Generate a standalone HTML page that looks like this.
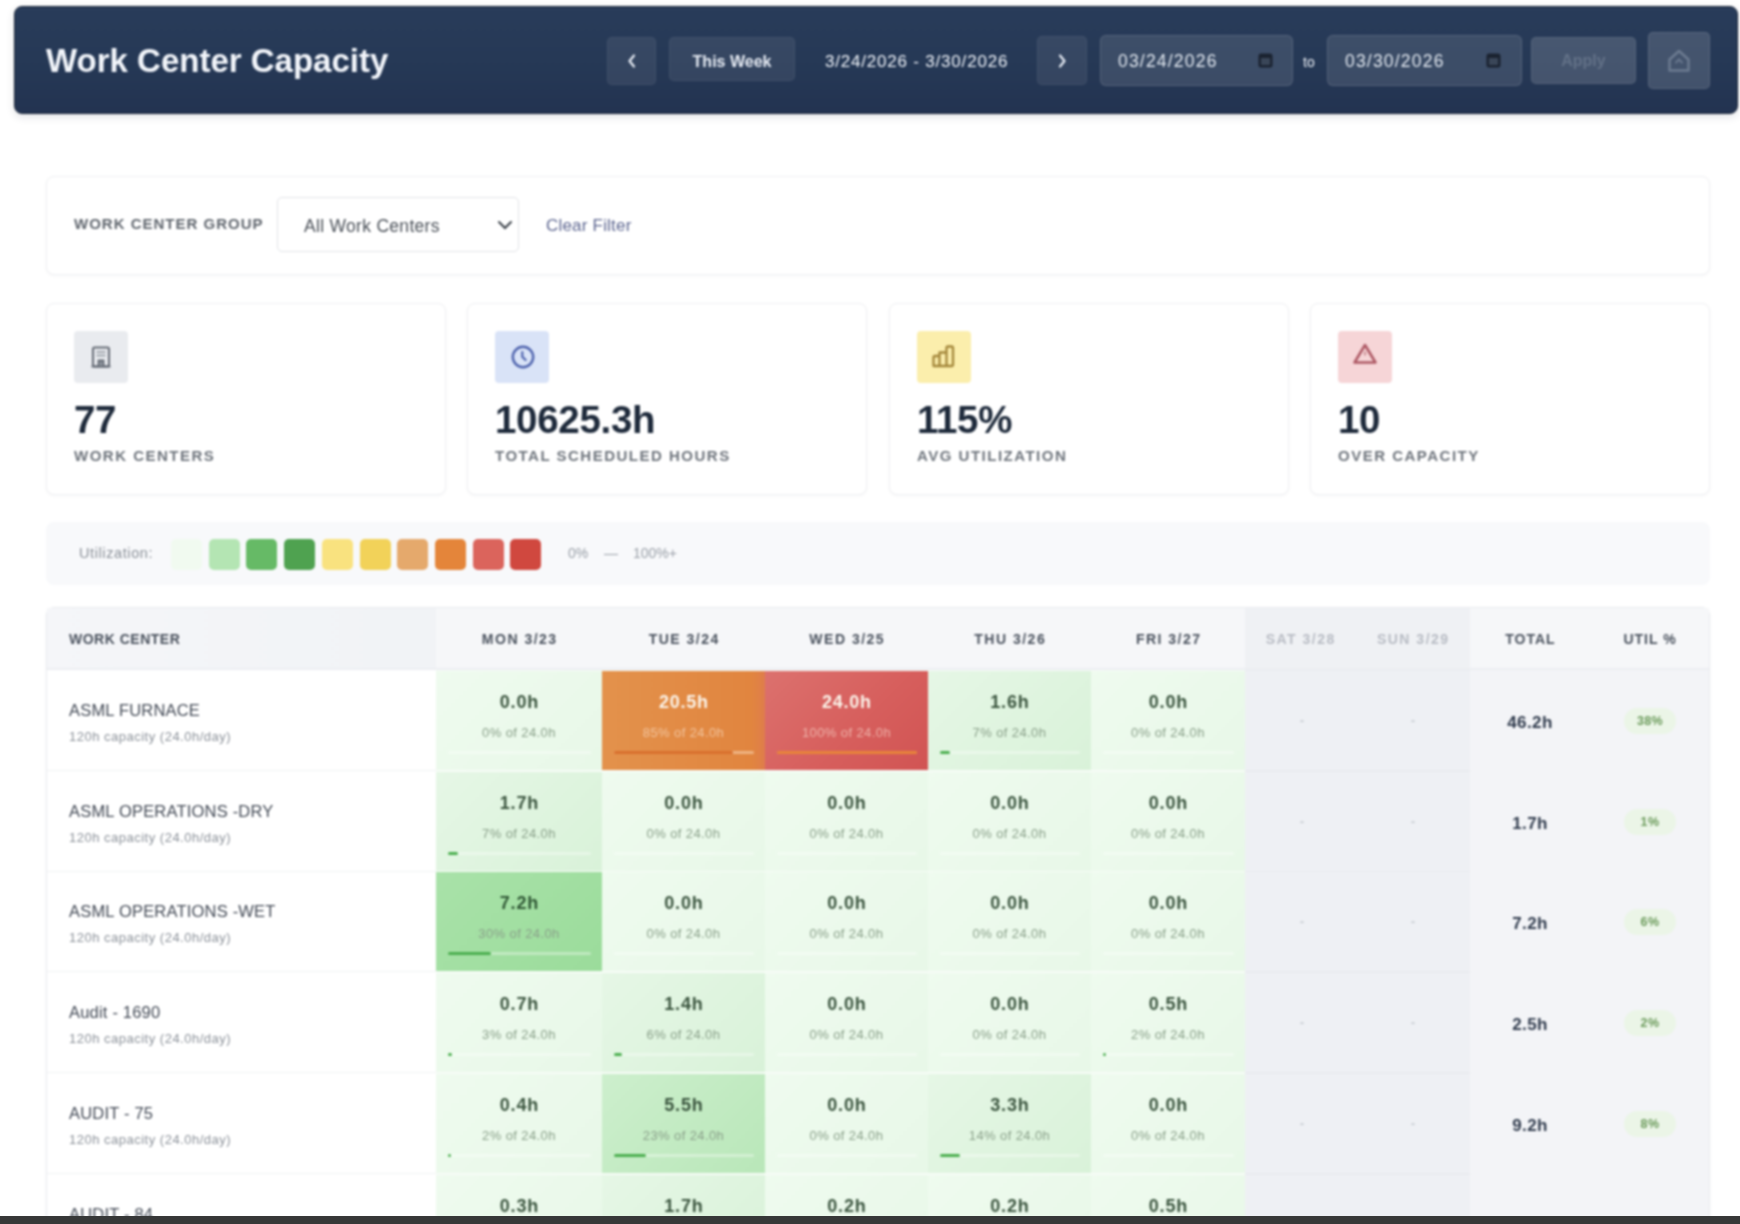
<!DOCTYPE html><html><head><meta charset="utf-8"><style>
*{box-sizing:border-box;margin:0;padding:0}
html,body{width:1740px;height:1224px;overflow:hidden;background:#fff;font-family:"Liberation Sans",sans-serif;position:relative}
#root{position:absolute;left:0;top:0;width:1740px;height:1224px;overflow:hidden;background:#fff;filter:blur(0.8px)}
.abs{position:absolute}
#hdr{left:14px;top:6px;width:1724px;height:108px;border-radius:8px;border:1px solid #1c2739;background:linear-gradient(180deg,#293c5a 0%,#263956 50%,#233351 100%);box-shadow:0 3px 8px rgba(30,40,60,.13)}
#title{left:46px;top:42px;color:#f2f5fa;font-size:33px;font-weight:bold;white-space:nowrap}
.hbtn{position:absolute;border-radius:5px;background:rgba(255,255,255,.075);border:1px solid rgba(255,255,255,.05);color:#e8edf5;font-size:16px;display:flex;align-items:center;justify-content:center}
.htxt{position:absolute;color:#eef2f8;font-size:17px;white-space:nowrap;line-height:20px}
.din{position:absolute;border-radius:6px;background:rgba(255,255,255,.105);border:1px solid rgba(255,255,255,.12);color:#e2e8f0;font-size:17.5px}
.card{position:absolute;background:#fff;border:1px solid #f0f1f4;border-radius:8px;box-shadow:0 1px 3px rgba(20,30,50,.04)}
.t{position:absolute;white-space:nowrap;line-height:1}
.lbl{font-size:15px;letter-spacing:1.5px;color:#6e747c;font-weight:bold}
.ib{position:absolute;width:54px;height:52px;border-radius:4px;display:flex;align-items:center;justify-content:center}
.sw{position:absolute;top:539px;width:31px;height:31px;border-radius:5px}
.cell{position:absolute;overflow:hidden}
.v{position:absolute;left:0;right:0;text-align:center;font-weight:bold;font-size:18px;line-height:1;top:22px;color:#3a543e;letter-spacing:.8px;text-indent:.8px}
.s{position:absolute;left:0;right:0;text-align:center;font-size:13px;line-height:1;top:55px;color:#8aa08a;letter-spacing:.4px}
.tr{position:absolute;left:12px;right:11px;top:80px;height:3px;border-radius:2px;background:rgba(255,255,255,.55)}
.fl{position:absolute;left:0;top:0;bottom:0;border-radius:2px;background:#4caf50}
.hd{position:absolute;top:632px;font-size:14px;font-weight:bold;letter-spacing:1.5px;color:#4a525e;text-align:center;line-height:1}
.nm{position:absolute;left:69px;font-size:16.5px;color:#424955;white-space:nowrap;line-height:1;letter-spacing:.2px}
.sb{position:absolute;left:69px;font-size:13px;color:#8b9199;white-space:nowrap;line-height:1;letter-spacing:.5px}
.tot{position:absolute;left:1470px;width:120px;text-align:center;font-size:17px;font-weight:bold;color:#2f3a4c;line-height:1;letter-spacing:.4px}
.ut{position:absolute;left:1624px;width:52px;height:26px;border-radius:13px;background:#ebf5e7;color:#6c9b5c;font-size:12.5px;letter-spacing:.4px;font-weight:bold;display:flex;align-items:center;justify-content:center}
</style></head><body><div id="root">
<div id="hdr" class="abs"></div>
<div id="title" class="abs">Work Center Capacity</div>
<div class="hbtn" style="left:607px;top:37px;width:49px;height:48px"><svg width="14" height="18" viewBox="0 0 14 18"><path d="M9 3.5 L4.5 9 L9 14.5" stroke="#e8edf5" stroke-width="2.2" fill="none" stroke-linecap="round" stroke-linejoin="round"/></svg></div>
<div class="hbtn" style="left:669px;top:37px;width:126px;height:44px;font-weight:bold;padding-top:5px">This Week</div>
<div class="htxt" style="left:825px;top:52px;letter-spacing:.8px">3/24/2026 - 3/30/2026</div>
<div class="hbtn" style="left:1037px;top:36px;width:50px;height:49px"><svg width="14" height="18" viewBox="0 0 14 18"><path d="M5 3.5 L9.5 9 L5 14.5" stroke="#e8edf5" stroke-width="2.2" fill="none" stroke-linecap="round" stroke-linejoin="round"/></svg></div>
<div class="din" style="left:1100px;top:35px;width:193px;height:51px"><span class="t" style="left:17px;top:17px;letter-spacing:1.2px">03/24/2026</span><svg width="15" height="15" viewBox="0 0 15 15" style="position:absolute;left:157px;top:17px"><rect x="0.5" y="0.5" width="14" height="14" rx="2.5" fill="#1a2230"/><rect x="3" y="5" width="9" height="7" fill="#3a4658"/></svg></div>
<div class="htxt" style="left:1303px;top:52px;font-size:14px">to</div>
<div class="din" style="left:1327px;top:35px;width:195px;height:51px"><span class="t" style="left:17px;top:17px;letter-spacing:1.2px">03/30/2026</span><svg width="15" height="15" viewBox="0 0 15 15" style="position:absolute;left:158px;top:17px"><rect x="0.5" y="0.5" width="14" height="14" rx="2.5" fill="#1a2230"/><rect x="3" y="5" width="9" height="7" fill="#3a4658"/></svg></div>
<div class="hbtn" style="left:1531px;top:37px;width:105px;height:47px;background:rgba(255,255,255,.15);border-color:rgba(255,255,255,.08);color:rgba(200,210,225,.22);font-weight:bold">Apply</div>
<div class="hbtn" style="left:1648px;top:32px;width:62px;height:57px;background:rgba(255,255,255,.14);border-color:rgba(255,255,255,.1)"><svg width="26" height="28" viewBox="0 0 26 28"><path d="M3.5 12.5 L13 4 L22.5 12.5 V23.5 H3.5 Z" stroke="rgba(190,202,220,.33)" stroke-width="2.4" fill="none" stroke-linejoin="round"/><path d="M9.5 16 L13 12.5 L16.5 16" stroke="rgba(190,202,220,.3)" stroke-width="2" fill="none"/></svg></div>
<div class="card" style="left:46px;top:176px;width:1664px;height:99px"></div>
<div class="t lbl" style="left:74px;top:216px;letter-spacing:1.0px;color:#60666e">WORK CENTER GROUP</div>
<div class="abs" style="left:277px;top:197px;width:242px;height:55px;border:1px solid #e2e4e8;border-radius:5px;background:#fff"></div>
<div class="t" style="left:304px;top:218px;font-size:17.5px;color:#4a5058;letter-spacing:.3px">All Work Centers</div>
<svg class="abs" style="left:496px;top:218px" width="18" height="14" viewBox="0 0 18 14"><path d="M3 4 L9 10 L15 4" stroke="#3a4048" stroke-width="2" fill="none" stroke-linecap="round"/></svg>
<div class="t" style="left:546px;top:217px;font-size:17px;color:#5d6690;letter-spacing:.2px">Clear Filter</div>
<div class="card" style="left:46px;top:303px;width:400px;height:192px"></div>
<div class="ib" style="left:74px;top:331px;background:#e9ebef"><svg width="24" height="24" viewBox="0 0 24 24"><rect x="4" y="2.5" width="16" height="19" rx="1.5" stroke="#656b75" stroke-width="2" fill="none"/><path d="M2.5 21.5 H21.5" stroke="#656b75" stroke-width="2"/><path d="M7.5 7 H16.5 M7.5 10.5 H16.5" stroke="#8d939c" stroke-width="1.3"/><path d="M9.5 21 V15.5 H14.5 V21" stroke="#656b75" stroke-width="1.8" fill="#8d939c"/></svg></div>
<div class="t" style="left:74px;top:401px;font-size:38.5px;font-weight:bold;color:#1e2a3b;letter-spacing:-.3px">77</div>
<div class="t lbl" style="left:74px;top:448px">WORK CENTERS</div>
<div class="card" style="left:467px;top:303px;width:400px;height:192px"></div>
<div class="ib" style="left:495px;top:331px;background:#d9e3f7"><svg width="26" height="26" viewBox="0 0 26 26" style="margin-left:2px;margin-top:-1px"><circle cx="13" cy="13" r="10.2" stroke="#4f64ae" stroke-width="2.4" fill="none"/><path d="M12.3 8.2 V12.8 L15.6 16" stroke="#4f64ae" stroke-width="2.2" fill="none" stroke-linecap="round"/></svg></div>
<div class="t" style="left:495px;top:401px;font-size:38.5px;font-weight:bold;color:#1e2a3b;letter-spacing:-.3px">10625.3h</div>
<div class="t lbl" style="left:495px;top:448px">TOTAL SCHEDULED HOURS</div>
<div class="card" style="left:889px;top:303px;width:400px;height:192px"></div>
<div class="ib" style="left:917px;top:331px;background:#fbeeac"><svg width="28" height="28" viewBox="0 0 28 28" style="margin-left:-1px;margin-top:-2px"><path d="M3.5 24 V15.5 Q3.5 14 5 14 H9.5 V24 Z M9.5 24 V10.5 H16.5 V24 M16.5 24 V6 Q16.5 4.5 18 4.5 H21.5 Q23 4.5 23 6 V22.5 Q23 24 21.5 24 H3.5" stroke="#a3863a" stroke-width="2.3" fill="none" stroke-linejoin="round"/></svg></div>
<div class="t" style="left:917px;top:401px;font-size:38.5px;font-weight:bold;color:#1e2a3b;letter-spacing:-.3px">115%</div>
<div class="t lbl" style="left:917px;top:448px">AVG UTILIZATION</div>
<div class="card" style="left:1310px;top:303px;width:400px;height:192px"></div>
<div class="ib" style="left:1338px;top:331px;background:#f6d5d7"><svg width="28" height="26" viewBox="0 0 28 26" style="margin-top:-4px"><path d="M14 3 L24.5 20.5 H3.5 Z" stroke="#ad5864" stroke-width="2.5" fill="none" stroke-linejoin="round"/><path d="M14 9.5 V13.5" stroke="#c07a84" stroke-width="1.6"/></svg></div>
<div class="t" style="left:1338px;top:401px;font-size:38.5px;font-weight:bold;color:#1e2a3b;letter-spacing:-.3px">10</div>
<div class="t lbl" style="left:1338px;top:448px">OVER CAPACITY</div>
<div class="abs" style="left:46px;top:522px;width:1664px;height:63px;background:#f8f9fb;border-radius:8px"></div>
<div class="t" style="left:79px;top:546px;font-size:14.5px;color:#8a9098;letter-spacing:.6px">Utilization:</div>
<div class="sw" style="left:171px;background:#f1faf0"></div>
<div class="sw" style="left:209px;background:#b4e5b3"></div>
<div class="sw" style="left:246px;background:#66ba66"></div>
<div class="sw" style="left:284px;background:#4fa250"></div>
<div class="sw" style="left:322px;background:#f9e27f"></div>
<div class="sw" style="left:360px;background:#f2d259"></div>
<div class="sw" style="left:397px;background:#e5a96c"></div>
<div class="sw" style="left:435px;background:#e4853a"></div>
<div class="sw" style="left:473px;background:#db645c"></div>
<div class="sw" style="left:510px;background:#d0483f"></div>
<div class="t" style="left:568px;top:546px;font-size:14px;color:#9aa0a8">0%</div>
<div class="t" style="left:604px;top:546px;font-size:14px;color:#9aa0a8">—</div>
<div class="t" style="left:633px;top:546px;font-size:14px;color:#9aa0a8">100%+</div>
<div class="card" style="left:46px;top:607px;width:1664px;height:640px;border-color:#e9ebef;border-radius:8px 8px 0 0;overflow:hidden"></div>
<div class="abs" style="left:47px;top:608px;width:1662px;height:62px;background:#f6f7f9;border-bottom:2px solid #eceef2"></div>
<div class="abs" style="left:47px;top:608px;width:389px;height:62px;background:linear-gradient(90deg,#f5f6f9,#f1f3f6);border-bottom:2px solid #eceef2"></div>
<div class="abs" style="left:1245px;top:608px;width:225px;height:62px;background:#eff1f4;border-bottom:2px solid #eceef2"></div>
<div class="hd" style="left:69px;letter-spacing:.5px">WORK CENTER</div>
<div class="hd" style="left:436px;width:166px;color:#4a525e;letter-spacing:1.5px;text-indent:1.5px">MON 3/23</div>
<div class="hd" style="left:602px;width:163px;color:#4a525e;letter-spacing:1.5px;text-indent:1.5px">TUE 3/24</div>
<div class="hd" style="left:765px;width:163px;color:#4a525e;letter-spacing:1.5px;text-indent:1.5px">WED 3/25</div>
<div class="hd" style="left:928px;width:163px;color:#4a525e;letter-spacing:1.5px;text-indent:1.5px">THU 3/26</div>
<div class="hd" style="left:1091px;width:154px;color:#4a525e;letter-spacing:1.5px;text-indent:1.5px">FRI 3/27</div>
<div class="hd" style="left:1245px;width:110px;color:#b8bcc4;letter-spacing:1.5px;text-indent:1.5px">SAT 3/28</div>
<div class="hd" style="left:1355px;width:115px;color:#b8bcc4;letter-spacing:1.5px;text-indent:1.5px">SUN 3/29</div>
<div class="hd" style="left:1470px;width:120px;color:#4a525e;letter-spacing:1.0px;text-indent:1.0px">TOTAL</div>
<div class="hd" style="left:1590px;width:119px;color:#4a525e;letter-spacing:1.0px;text-indent:1.0px">UTIL %</div>
<div class="abs" style="left:47px;top:670px;width:389px;height:560px;background:#fff"></div>
<div class="abs" style="left:436px;top:670px;width:809px;height:560px;background:#f7fcf7"></div>
<div class="abs" style="left:1245px;top:670px;width:225px;height:560px;background:#e9ebef"></div>
<div class="abs" style="left:1470px;top:670px;width:239px;height:560px;background:#f3f4f7"></div>
<div class="abs" style="left:47px;top:770px;width:389px;height:1px;background:#f1f2f4"></div>
<div class="nm" style="top:702px">ASML FURNACE</div>
<div class="sb" style="top:730px">120h capacity (24.0h/day)</div>
<div class="cell" style="left:436px;top:671px;width:166px;height:99px;background:linear-gradient(135deg,#effbef,#e8f8e8)"><div class="v" style="color:#3a543e">0.0h</div><div class="s" style="color:#8aa08a">0% of 24.0h</div><div class="tr" style="background:rgba(255,255,255,.35)"><div class="fl" style="width:0%;background:#4caf50"></div></div></div>
<div class="cell" style="left:602px;top:671px;width:163px;height:99px;background:linear-gradient(90deg,#e3924c,#e1853f 92%,#df7d4c)"><div class="v" style="color:#fbf4ea">20.5h</div><div class="s" style="color:rgba(255,240,225,.55)">85% of 24.0h</div><div class="tr" style="background:rgba(255,235,210,.45)"><div class="fl" style="width:85%;background:#d9702e"></div></div></div>
<div class="cell" style="left:765px;top:671px;width:163px;height:99px;background:linear-gradient(135deg,#dc716e,#d75f5d 55%,#d15453)"><div class="v" style="color:#fbf4ea">24.0h</div><div class="s" style="color:rgba(255,240,225,.55)">100% of 24.0h</div><div class="tr" style="background:rgba(255,220,200,.35)"><div class="fl" style="width:100%;background:#e8843a"></div></div></div>
<div class="cell" style="left:928px;top:671px;width:163px;height:99px;background:linear-gradient(135deg,#e6f7e6,#d9f2d9)"><div class="v" style="color:#3a543e">1.6h</div><div class="s" style="color:#8aa08a">7% of 24.0h</div><div class="tr" style="background:rgba(255,255,255,.35)"><div class="fl" style="width:7%;background:#4caf50"></div></div></div>
<div class="cell" style="left:1091px;top:671px;width:154px;height:99px;background:linear-gradient(135deg,#effbef,#e8f8e8)"><div class="v" style="color:#3a543e">0.0h</div><div class="s" style="color:#8aa08a">0% of 24.0h</div><div class="tr" style="background:rgba(255,255,255,.35)"><div class="fl" style="width:0%;background:#4caf50"></div></div></div>
<div class="abs" style="left:1245px;top:671px;width:225px;height:99px;background:#eef0f4"></div>
<div class="t" style="left:1300px;top:715px;font-size:12px;font-weight:bold;color:#c4c8ce">-</div>
<div class="t" style="left:1411px;top:715px;font-size:12px;font-weight:bold;color:#c4c8ce">-</div>
<div class="tot" style="top:714px">46.2h</div>
<div class="ut" style="top:708px">38%</div>
<div class="abs" style="left:47px;top:871px;width:389px;height:1px;background:#f1f2f4"></div>
<div class="nm" style="top:803px">ASML OPERATIONS -DRY</div>
<div class="sb" style="top:831px">120h capacity (24.0h/day)</div>
<div class="cell" style="left:436px;top:772px;width:166px;height:99px;background:linear-gradient(135deg,#e6f7e6,#d9f2d9)"><div class="v" style="color:#3a543e">1.7h</div><div class="s" style="color:#8aa08a">7% of 24.0h</div><div class="tr" style="background:rgba(255,255,255,.35)"><div class="fl" style="width:7%;background:#4caf50"></div></div></div>
<div class="cell" style="left:602px;top:772px;width:163px;height:99px;background:linear-gradient(135deg,#effbef,#e8f8e8)"><div class="v" style="color:#3a543e">0.0h</div><div class="s" style="color:#8aa08a">0% of 24.0h</div><div class="tr" style="background:rgba(255,255,255,.35)"><div class="fl" style="width:0%;background:#4caf50"></div></div></div>
<div class="cell" style="left:765px;top:772px;width:163px;height:99px;background:linear-gradient(135deg,#effbef,#e8f8e8)"><div class="v" style="color:#3a543e">0.0h</div><div class="s" style="color:#8aa08a">0% of 24.0h</div><div class="tr" style="background:rgba(255,255,255,.35)"><div class="fl" style="width:0%;background:#4caf50"></div></div></div>
<div class="cell" style="left:928px;top:772px;width:163px;height:99px;background:linear-gradient(135deg,#effbef,#e8f8e8)"><div class="v" style="color:#3a543e">0.0h</div><div class="s" style="color:#8aa08a">0% of 24.0h</div><div class="tr" style="background:rgba(255,255,255,.35)"><div class="fl" style="width:0%;background:#4caf50"></div></div></div>
<div class="cell" style="left:1091px;top:772px;width:154px;height:99px;background:linear-gradient(135deg,#effbef,#e8f8e8)"><div class="v" style="color:#3a543e">0.0h</div><div class="s" style="color:#8aa08a">0% of 24.0h</div><div class="tr" style="background:rgba(255,255,255,.35)"><div class="fl" style="width:0%;background:#4caf50"></div></div></div>
<div class="abs" style="left:1245px;top:772px;width:225px;height:99px;background:#eef0f4"></div>
<div class="t" style="left:1300px;top:816px;font-size:12px;font-weight:bold;color:#c4c8ce">-</div>
<div class="t" style="left:1411px;top:816px;font-size:12px;font-weight:bold;color:#c4c8ce">-</div>
<div class="tot" style="top:815px">1.7h</div>
<div class="ut" style="top:809px">1%</div>
<div class="abs" style="left:47px;top:971px;width:389px;height:1px;background:#f1f2f4"></div>
<div class="nm" style="top:903px">ASML OPERATIONS -WET</div>
<div class="sb" style="top:931px">120h capacity (24.0h/day)</div>
<div class="cell" style="left:436px;top:872px;width:166px;height:99px;background:linear-gradient(135deg,#a9e2a9,#9bdc9b)"><div class="v" style="color:#2f5634">7.2h</div><div class="s" style="color:#8aa08a">30% of 24.0h</div><div class="tr" style="background:rgba(255,255,255,.35)"><div class="fl" style="width:30%;background:#4caf50"></div></div></div>
<div class="cell" style="left:602px;top:872px;width:163px;height:99px;background:linear-gradient(135deg,#effbef,#e8f8e8)"><div class="v" style="color:#3a543e">0.0h</div><div class="s" style="color:#8aa08a">0% of 24.0h</div><div class="tr" style="background:rgba(255,255,255,.35)"><div class="fl" style="width:0%;background:#4caf50"></div></div></div>
<div class="cell" style="left:765px;top:872px;width:163px;height:99px;background:linear-gradient(135deg,#effbef,#e8f8e8)"><div class="v" style="color:#3a543e">0.0h</div><div class="s" style="color:#8aa08a">0% of 24.0h</div><div class="tr" style="background:rgba(255,255,255,.35)"><div class="fl" style="width:0%;background:#4caf50"></div></div></div>
<div class="cell" style="left:928px;top:872px;width:163px;height:99px;background:linear-gradient(135deg,#effbef,#e8f8e8)"><div class="v" style="color:#3a543e">0.0h</div><div class="s" style="color:#8aa08a">0% of 24.0h</div><div class="tr" style="background:rgba(255,255,255,.35)"><div class="fl" style="width:0%;background:#4caf50"></div></div></div>
<div class="cell" style="left:1091px;top:872px;width:154px;height:99px;background:linear-gradient(135deg,#effbef,#e8f8e8)"><div class="v" style="color:#3a543e">0.0h</div><div class="s" style="color:#8aa08a">0% of 24.0h</div><div class="tr" style="background:rgba(255,255,255,.35)"><div class="fl" style="width:0%;background:#4caf50"></div></div></div>
<div class="abs" style="left:1245px;top:872px;width:225px;height:99px;background:#eef0f4"></div>
<div class="t" style="left:1300px;top:916px;font-size:12px;font-weight:bold;color:#c4c8ce">-</div>
<div class="t" style="left:1411px;top:916px;font-size:12px;font-weight:bold;color:#c4c8ce">-</div>
<div class="tot" style="top:915px">7.2h</div>
<div class="ut" style="top:909px">6%</div>
<div class="abs" style="left:47px;top:1072px;width:389px;height:1px;background:#f1f2f4"></div>
<div class="nm" style="top:1004px">Audit - 1690</div>
<div class="sb" style="top:1032px">120h capacity (24.0h/day)</div>
<div class="cell" style="left:436px;top:973px;width:166px;height:99px;background:linear-gradient(135deg,#effbef,#e8f8e8)"><div class="v" style="color:#3a543e">0.7h</div><div class="s" style="color:#8aa08a">3% of 24.0h</div><div class="tr" style="background:rgba(255,255,255,.35)"><div class="fl" style="width:3%;background:#4caf50"></div></div></div>
<div class="cell" style="left:602px;top:973px;width:163px;height:99px;background:linear-gradient(135deg,#e6f7e6,#d9f2d9)"><div class="v" style="color:#3a543e">1.4h</div><div class="s" style="color:#8aa08a">6% of 24.0h</div><div class="tr" style="background:rgba(255,255,255,.35)"><div class="fl" style="width:6%;background:#4caf50"></div></div></div>
<div class="cell" style="left:765px;top:973px;width:163px;height:99px;background:linear-gradient(135deg,#effbef,#e8f8e8)"><div class="v" style="color:#3a543e">0.0h</div><div class="s" style="color:#8aa08a">0% of 24.0h</div><div class="tr" style="background:rgba(255,255,255,.35)"><div class="fl" style="width:0%;background:#4caf50"></div></div></div>
<div class="cell" style="left:928px;top:973px;width:163px;height:99px;background:linear-gradient(135deg,#effbef,#e8f8e8)"><div class="v" style="color:#3a543e">0.0h</div><div class="s" style="color:#8aa08a">0% of 24.0h</div><div class="tr" style="background:rgba(255,255,255,.35)"><div class="fl" style="width:0%;background:#4caf50"></div></div></div>
<div class="cell" style="left:1091px;top:973px;width:154px;height:99px;background:linear-gradient(135deg,#effbef,#e8f8e8)"><div class="v" style="color:#3a543e">0.5h</div><div class="s" style="color:#8aa08a">2% of 24.0h</div><div class="tr" style="background:rgba(255,255,255,.35)"><div class="fl" style="width:2%;background:#4caf50"></div></div></div>
<div class="abs" style="left:1245px;top:973px;width:225px;height:99px;background:#eef0f4"></div>
<div class="t" style="left:1300px;top:1017px;font-size:12px;font-weight:bold;color:#c4c8ce">-</div>
<div class="t" style="left:1411px;top:1017px;font-size:12px;font-weight:bold;color:#c4c8ce">-</div>
<div class="tot" style="top:1016px">2.5h</div>
<div class="ut" style="top:1010px">2%</div>
<div class="abs" style="left:47px;top:1173px;width:389px;height:1px;background:#f1f2f4"></div>
<div class="nm" style="top:1105px">AUDIT - 75</div>
<div class="sb" style="top:1133px">120h capacity (24.0h/day)</div>
<div class="cell" style="left:436px;top:1074px;width:166px;height:99px;background:linear-gradient(135deg,#effbef,#e8f8e8)"><div class="v" style="color:#3a543e">0.4h</div><div class="s" style="color:#8aa08a">2% of 24.0h</div><div class="tr" style="background:rgba(255,255,255,.35)"><div class="fl" style="width:2%;background:#4caf50"></div></div></div>
<div class="cell" style="left:602px;top:1074px;width:163px;height:99px;background:linear-gradient(135deg,#cdefcd,#b9e7b9)"><div class="v" style="color:#3a543e">5.5h</div><div class="s" style="color:#8aa08a">23% of 24.0h</div><div class="tr" style="background:rgba(255,255,255,.35)"><div class="fl" style="width:23%;background:#4caf50"></div></div></div>
<div class="cell" style="left:765px;top:1074px;width:163px;height:99px;background:linear-gradient(135deg,#effbef,#e8f8e8)"><div class="v" style="color:#3a543e">0.0h</div><div class="s" style="color:#8aa08a">0% of 24.0h</div><div class="tr" style="background:rgba(255,255,255,.35)"><div class="fl" style="width:0%;background:#4caf50"></div></div></div>
<div class="cell" style="left:928px;top:1074px;width:163px;height:99px;background:linear-gradient(135deg,#e6f7e6,#d9f2d9)"><div class="v" style="color:#3a543e">3.3h</div><div class="s" style="color:#8aa08a">14% of 24.0h</div><div class="tr" style="background:rgba(255,255,255,.35)"><div class="fl" style="width:14%;background:#4caf50"></div></div></div>
<div class="cell" style="left:1091px;top:1074px;width:154px;height:99px;background:linear-gradient(135deg,#effbef,#e8f8e8)"><div class="v" style="color:#3a543e">0.0h</div><div class="s" style="color:#8aa08a">0% of 24.0h</div><div class="tr" style="background:rgba(255,255,255,.35)"><div class="fl" style="width:0%;background:#4caf50"></div></div></div>
<div class="abs" style="left:1245px;top:1074px;width:225px;height:99px;background:#eef0f4"></div>
<div class="t" style="left:1300px;top:1118px;font-size:12px;font-weight:bold;color:#c4c8ce">-</div>
<div class="t" style="left:1411px;top:1118px;font-size:12px;font-weight:bold;color:#c4c8ce">-</div>
<div class="tot" style="top:1117px">9.2h</div>
<div class="ut" style="top:1111px">8%</div>
<div class="abs" style="left:47px;top:1274px;width:389px;height:1px;background:#f1f2f4"></div>
<div class="nm" style="top:1206px">AUDIT - 84</div>
<div class="sb" style="top:1234px">120h capacity (24.0h/day)</div>
<div class="cell" style="left:436px;top:1175px;width:166px;height:99px;background:linear-gradient(135deg,#effbef,#e8f8e8)"><div class="v" style="color:#3a543e">0.3h</div><div class="s" style="color:#8aa08a">1% of 24.0h</div><div class="tr" style="background:rgba(255,255,255,.35)"><div class="fl" style="width:1%;background:#4caf50"></div></div></div>
<div class="cell" style="left:602px;top:1175px;width:163px;height:99px;background:linear-gradient(135deg,#e6f7e6,#d9f2d9)"><div class="v" style="color:#3a543e">1.7h</div><div class="s" style="color:#8aa08a">7% of 24.0h</div><div class="tr" style="background:rgba(255,255,255,.35)"><div class="fl" style="width:7%;background:#4caf50"></div></div></div>
<div class="cell" style="left:765px;top:1175px;width:163px;height:99px;background:linear-gradient(135deg,#effbef,#e8f8e8)"><div class="v" style="color:#3a543e">0.2h</div><div class="s" style="color:#8aa08a">1% of 24.0h</div><div class="tr" style="background:rgba(255,255,255,.35)"><div class="fl" style="width:1%;background:#4caf50"></div></div></div>
<div class="cell" style="left:928px;top:1175px;width:163px;height:99px;background:linear-gradient(135deg,#effbef,#e8f8e8)"><div class="v" style="color:#3a543e">0.2h</div><div class="s" style="color:#8aa08a">1% of 24.0h</div><div class="tr" style="background:rgba(255,255,255,.35)"><div class="fl" style="width:1%;background:#4caf50"></div></div></div>
<div class="cell" style="left:1091px;top:1175px;width:154px;height:99px;background:linear-gradient(135deg,#effbef,#e8f8e8)"><div class="v" style="color:#3a543e">0.5h</div><div class="s" style="color:#8aa08a">2% of 24.0h</div><div class="tr" style="background:rgba(255,255,255,.35)"><div class="fl" style="width:2%;background:#4caf50"></div></div></div>
<div class="abs" style="left:1245px;top:1175px;width:225px;height:99px;background:#eef0f4"></div>
<div class="t" style="left:1300px;top:1219px;font-size:12px;font-weight:bold;color:#c4c8ce">-</div>
<div class="t" style="left:1411px;top:1219px;font-size:12px;font-weight:bold;color:#c4c8ce">-</div>
</div><div class="abs" style="left:0;top:1216px;width:1740px;height:8px;background:#373838"></div>
</body></html>
